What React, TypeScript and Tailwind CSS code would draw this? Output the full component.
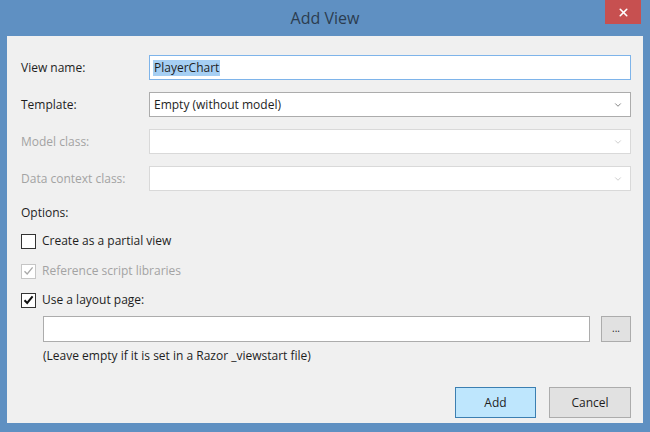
import { ChevronDown, X } from "lucide-react";

const Check = ({ checked, disabled }: { checked?: boolean; disabled?: boolean }) => (
  <div
    className={`w-[15px] h-[15px] border flex items-center justify-center bg-white ${
      disabled ? "border-[#c6c6c6] bg-[#f4f4f4]" : "border-[#333333]"
    }`}
  >
    {checked && (
      <svg width="11" height="10" viewBox="0 0 11 10">
        <path
          d="M1.5 5.2 L4.2 8 L9.6 1.4"
          fill="none"
          stroke={disabled ? "#a8a8a8" : "#111111"}
          strokeWidth={disabled ? 1.3 : 2}
        />
      </svg>
    )}
  </div>
);

const Combo = ({ value, disabled }: { value?: string; disabled?: boolean }) => (
  <div
    className={`flex-1 h-[25px] border bg-white flex items-center pl-[4px] pr-[7px] ${
      disabled ? "border-[#d9d9d9]" : "border-[#acacac]"
    }`}
  >
    <span className="flex-1 text-[#1e1e1e]">{value}</span>
    <ChevronDown
      size={10}
      strokeWidth={2}
      className={disabled ? "text-[#c4c4c4]" : "text-[#6d6d6d]"}
    />
  </div>
);

export default function App() {
  return (
    <div
      className="w-[650px] h-[432px] bg-[#5f90c2] flex flex-col pl-[7px] pr-[7px] pb-[9px] text-[12px] leading-[16px]"
      style={{ fontFamily: '"Segoe UI", "Open Sans", "Liberation Sans", sans-serif' }}
    >
      {/* title bar */}
      <div className="h-[36px] flex items-start relative">
        <div className="flex-1 text-center text-[16px] leading-[20px] pt-[8px] text-[#2c3d50]">
          Add View
        </div>
        <div className="absolute right-[2px] top-0 w-[36px] h-[24px] bg-[#c75050] flex items-center justify-center">
          <X size={13} strokeWidth={3} className="text-white" />
        </div>
      </div>

      {/* body */}
      <div className="flex-1 bg-[#f0f0f0] flex flex-col pl-[14px] pr-[12px] pt-[19px] text-[#1e1e1e]">
        <div className="flex items-center h-[25px]">
          <div className="w-[128px]">View name:</div>
          <div className="flex-1 h-[25px] border border-[#7eb4ea] bg-white flex items-center pl-[3px]">
            <span className="bg-[#a6cff3] px-[1px]">PlayerChart</span>
          </div>
        </div>
        <div className="flex items-center h-[25px] mt-[12px]">
          <div className="w-[128px]">Template:</div>
          <Combo value="Empty (without model)" />
        </div>
        <div className="flex items-center h-[25px] mt-[12px]">
          <div className="w-[128px] text-[#a3a3a3]">Model class:</div>
          <Combo disabled />
        </div>
        <div className="flex items-center h-[25px] mt-[12px]">
          <div className="w-[128px] text-[#a3a3a3]">Data context class:</div>
          <Combo disabled />
        </div>

        <div className="mt-[14px] h-[16px]">Options:</div>

        <div className="mt-[12px] flex items-center gap-[6px] h-[16px]">
          <Check />
          <span>Create as a partial view</span>
        </div>
        <div className="mt-[14px] flex items-center gap-[6px] h-[16px]">
          <Check checked disabled />
          <span className="text-[#a3a3a3]">Reference script libraries</span>
        </div>
        <div className="mt-[13px] flex items-center gap-[6px] h-[16px]">
          <Check checked />
          <span>Use a layout page:</span>
        </div>

        <div className="mt-[8px] pl-[22px] flex items-center gap-[11px]">
          <div className="flex-1 h-[26px] border border-[#acacac] bg-white" />
          <div className="w-[30px] h-[26px] border border-[#acacac] bg-[#e1e1e1] flex items-center justify-center text-[10px] leading-[10px] pb-[3px]">
            ...
          </div>
        </div>
        <div className="mt-[6px] pl-[22px] h-[16px]">
          (Leave empty if it is set in a Razor _viewstart file)
        </div>

        <div className="mt-[23px] flex justify-end gap-[13px]">
          <div className="w-[81px] h-[31px] border border-[#3c7fb1] bg-[#bee6fd] flex items-center justify-center">
            Add
          </div>
          <div className="w-[82px] h-[31px] border border-[#acacac] bg-[#e1e1e1] flex items-center justify-center">
            Cancel
          </div>
        </div>
      </div>
    </div>
  );
}
